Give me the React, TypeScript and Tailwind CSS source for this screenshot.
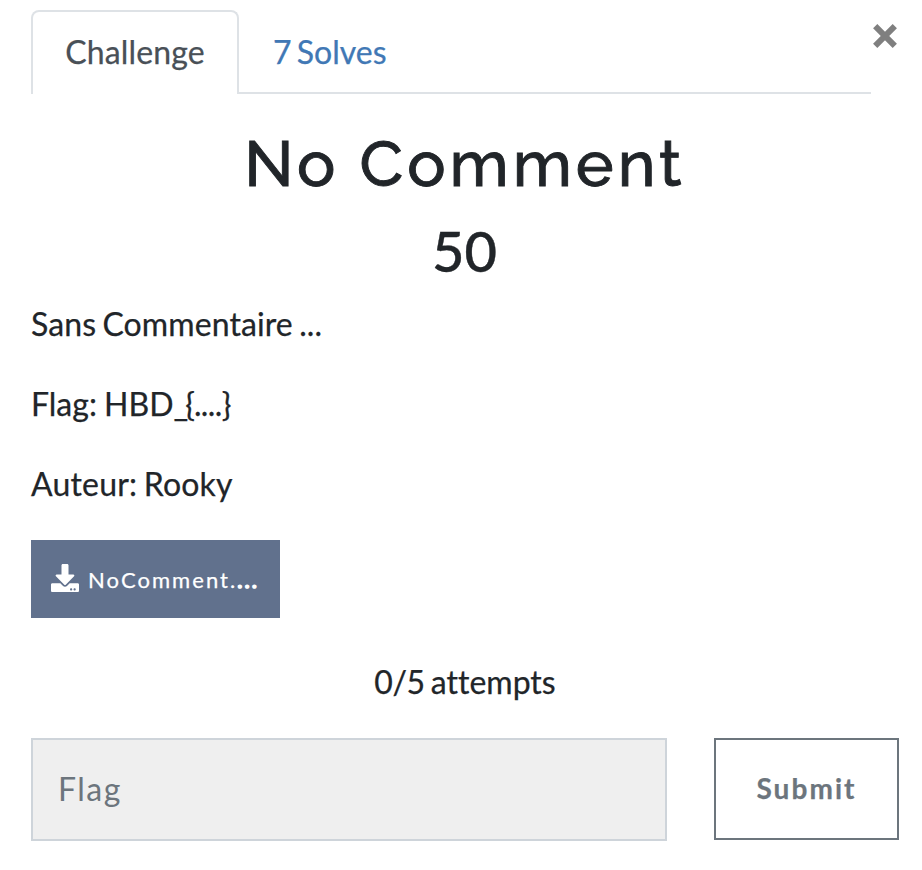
import { FaDownload } from "react-icons/fa";

export default function App() {
  return (
    <main className="h-[870px] w-[922px] overflow-hidden bg-white pt-[10px] pr-[23px] pl-[31px] font-['Lato',sans-serif] text-[32px] leading-[48px] text-[#212529] [-webkit-text-stroke:0.25px_currentColor] [font-variant-ligatures:none]">
      <header className="flex h-[84px] items-start">
        <nav className="flex h-[84px] w-[840px] items-end">
          <button className="h-[84px] w-[208px] rounded-t-[8px] border-2 border-b-0 border-[#dee2e6] pb-[2px] tracking-[0.15px] text-[#495057]">Challenge</button>
          <button className="h-[84px] flex-1 border-b-2 border-[#dee2e6] pt-[2px] pl-[34px] text-left text-[#4178b5] [word-spacing:-3px]">7 Solves</button>
        </nav>
        <button aria-label="Close" className="mt-[14px] ml-[2px] h-[24px] w-[24px]">
          <svg viewBox="0 0 24 24" className="h-6 w-6"><path d="M2.2 2.2 L21.8 21.8 M21.8 2.2 L2.2 21.8" stroke="#7f7f7f" strokeWidth="6" /></svg>
        </button>
      </header>
      <h2 className="mt-[31px] h-[77px] text-center font-['Raleway','Lato',sans-serif] text-[64px] leading-[77px] font-medium tracking-[4px] [-webkit-text-stroke:0.9px_currentColor]">No Comment</h2>
      <h3 className="mt-[15px] h-[68px] pr-px text-center text-[56px] leading-[68px] font-medium [-webkit-text-stroke:0.4px_currentColor]">50</h3>
      <p className="mt-[15px] tracking-[0.1px] [word-spacing:-2px]">Sans Commentaire ...</p>
      <p className="mt-[32px] [word-spacing:-1px]">Flag: HBD<span className="tracking-[-1px]"><span className="tracking-[-3px]">_</span>&#123;<span className="tracking-[-0.6px]">....</span>&#125;</span></p>
      <p className="mt-[32px] tracking-[0.2px] [word-spacing:-2px]">Auteur: Rooky</p>
      <button className="mt-[32px] flex h-[78px] w-[249px] items-center bg-[#61718d] pl-[19px] text-[22px] tracking-[2.05px] text-white">
        <FaDownload className="mt-[-2px] mr-[9px] ml-px h-7 w-7" /><span className="pt-px">NoComment.<span className="[-webkit-text-stroke:1.7px_currentColor]">...</span></span>
      </button>
      <p className="mt-[40px] text-center"><span className="tracking-[-0.4px]">0/5</span><span className="[word-spacing:-2px]"> attempts</span></p>
      <form className="mt-[32px] flex justify-between">
        <input placeholder="Flag" className="h-[103px] w-[636px] border-2 border-[#ced4da] bg-[#efefef] px-[25px] pb-[3px] tracking-[1.5px] [-webkit-text-stroke:0px] placeholder:text-[#6c757d]" />
        <button className="h-[102px] w-[185px] border-2 border-[#6c757d] pb-[2px] text-[28px] font-bold tracking-[2.05px] text-[#6c757d]">Submit</button>
      </form>
    </main>
  );
}
